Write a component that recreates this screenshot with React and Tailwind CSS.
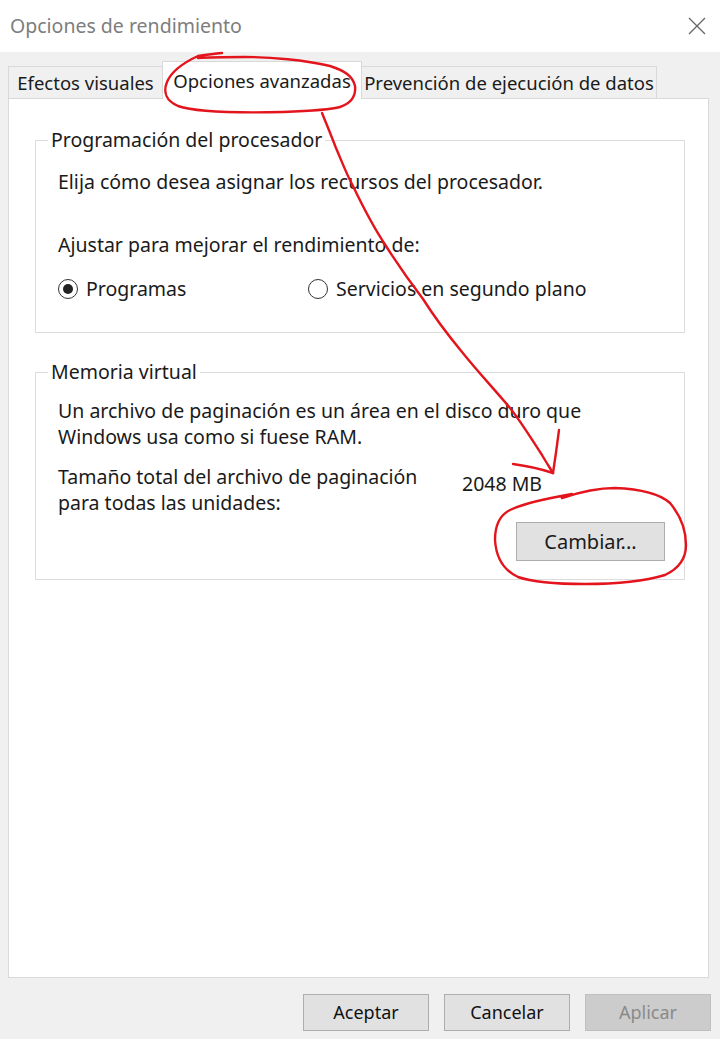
import React from 'react';

const font = { fontFamily: '"Noto Sans", "Open Sans", sans-serif' };

function Radio({ checked, label, className = '' }) {
  return (
    <label className={`flex items-center gap-[8px] ${className}`}>
      <span className="w-[20px] h-[20px] rounded-full border-[1.5px] border-[#333] flex items-center justify-center bg-white">
        {checked && <span className="w-[10px] h-[10px] rounded-full bg-[#222]" />}
      </span>
      <span>{label}</span>
    </label>
  );
}

function Tab({ children, active, w }) {
  if (active) {
    return (
      <div className={`${w} h-[38px] bg-white border border-[#d9d9d9] border-b-0 flex items-center justify-center -mx-px relative z-10`}>
        {children}
      </div>
    );
  }
  return (
    <div className={`${w} h-[33px] bg-[#f0f0f0] border border-[#d9d9d9] flex items-center justify-center`}>
      {children}
    </div>
  );
}

function Button({ children, disabled, className = '' }) {
  return (
    <button
      className={`w-[126px] h-[37px] border text-[18px] ${
        disabled ? 'bg-[#cccccc] border-[#bfbfbf] text-[#8a8a8a]' : 'bg-[#e1e1e1] border-[#adadad] text-[#111]'
      } ${className}`}
    >
      {children}
    </button>
  );
}

// hand drawn red marks over the dialog
function Annotations() {
  return (
    <svg className="absolute inset-0 z-20 pointer-events-none" width="720" height="1039" viewBox="0 0 720 1039" fill="none">
      <g stroke="#e3141c" strokeWidth="2.4" strokeLinecap="round" strokeLinejoin="round">
        <path d="M222 53 C212 54 205 55 198 56 C185 62 172 70 167 82 C163 92 166 101 178 106 C195 112 240 113 283 112 C310 111 330 110 340 107 C352 103 356 95 355 86 C353 77 346 71 330 66 C305 60 270 57 245 57 C225 57 210 57 198 58" />
        <path d="M322 113 C327 125 331 135 336 148 C342 162 347 175 352 184 C362 205 372 225 386 246 C398 265 410 282 423 299 C435 318 448 335 462 352 C478 372 495 390 510 408 C522 423 532 440 542 455 C546 462 550 468 553 473" />
        <path d="M513 464 C528 466 541 469 553 473" />
        <path d="M559 430 C557 446 555 460 553 473" />
        <path d="M562 498 C580 492 598 488 615 488 C640 489 660 494 670 503 C680 515 686 530 686 545 C686 558 680 568 665 575 C645 581 615 584 585 584 C560 584 535 583 518 577 C503 570 496 556 495 540 C495 525 500 515 510 510 C525 503 545 499 572 494" />
      </g>
    </svg>
  );
}

export default function App() {
  return (
    <div className="relative w-[720px] h-[1039px] bg-[#f0f0f0] flex flex-col text-[19.5px] text-[#1a1a1a] overflow-hidden" style={font}>
      {/* title bar */}
      <div className="h-[52px] bg-white flex items-center justify-between pl-[10px] pr-[14px] shrink-0">
        <span className="text-[19.5px] text-[#7d7d7d]">Opciones de rendimiento</span>
        <svg width="18" height="18" viewBox="0 0 18 18" className="text-[#666]">
          <path d="M1 1 L17 17 M17 1 L1 17" stroke="currentColor" strokeWidth="1.3" />
        </svg>
      </div>

      <div className="pl-[8px] pt-[9px]">
        <div className="flex items-end -mb-px text-[18.5px]">
          <Tab w="w-[155px]">Efectos visuales</Tab>
          <Tab w="w-[200px]" active>Opciones avanzadas</Tab>
          <Tab w="w-[296px]">Prevención de ejecución de datos</Tab>
        </div>

        <div className="w-[701px] h-[880px] bg-white border border-[#d9d9d9] pl-[26px] pt-[29px]">
          <fieldset className="w-[650px] border border-[#dcdcdc]">
            <legend className="ml-[12px] px-[3px] leading-[24px]">Programación del procesador</legend>
            <div className="pl-[22px] pt-[17px] pb-[30px]">
              <p className="leading-[26px]">Elija cómo desea asignar los recursos del procesador.</p>
              <p className="leading-[26px] mt-[37px]">Ajustar para mejorar el rendimiento de:</p>
              <div className="flex items-center h-[26px] mt-[18px]">
                <Radio checked label="Programas" className="w-[250px]" />
                <Radio label="Servicios en segundo plano" />
              </div>
            </div>
          </fieldset>

          <fieldset className="w-[650px] mt-[27px] border border-[#dcdcdc]">
            <legend className="ml-[12px] px-[3px] leading-[24px]">Memoria virtual</legend>
            <div className="pl-[22px] pr-[19px] pt-[14px] pb-[18px]">
              <p className="leading-[26px]">
                Un archivo de paginación es un área en el disco duro que
                <br />
                Windows usa como si fuese RAM.
              </p>
              <div className="flex mt-[14px]">
                <p className="leading-[26px] w-[404px]">
                  Tamaño total del archivo de paginación
                  <br />
                  para todas las unidades:
                </p>
                <span className="leading-[26px] pt-[7px]">2048 MB</span>
              </div>
              <div className="flex justify-end mt-[6px]">
                <button className="w-[149px] h-[39px] bg-[#e1e1e1] border border-[#adadad] text-[20px]">Cambiar...</button>
              </div>
            </div>
          </fieldset>
        </div>
      </div>

      <div className="flex justify-end gap-[15px] pr-[9px] mt-[16px]">
        <Button>Aceptar</Button>
        <Button>Cancelar</Button>
        <Button disabled>Aplicar</Button>
      </div>

      <Annotations />
    </div>
  );
}
